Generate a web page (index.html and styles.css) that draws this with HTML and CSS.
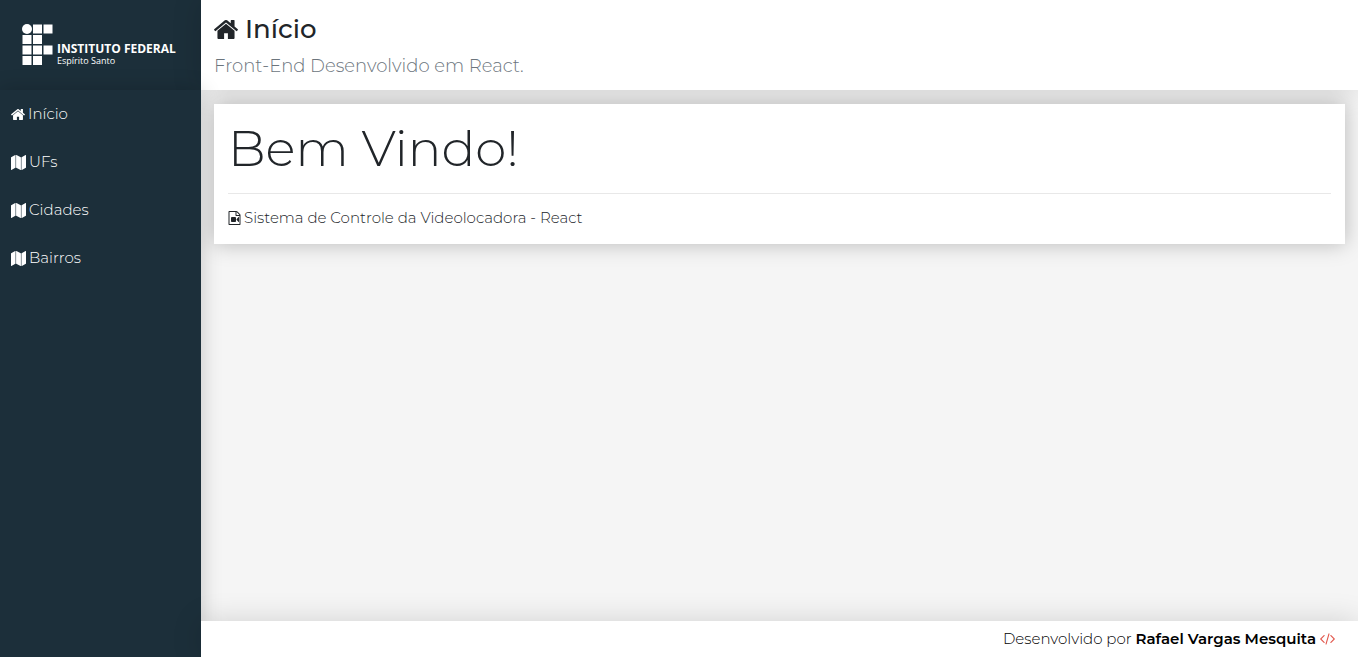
FILE: index.html
```html
<!DOCTYPE html>
<html lang="pt-BR">
<head>
<meta charset="utf-8">
<meta name="viewport" content="width=device-width, initial-scale=1">
<title>Início</title>
<link rel="stylesheet" href="styles.css">
</head>
<body>
<svg class="sprite" aria-hidden="true">
  <symbol id="home" viewBox="89 256 1614 1280"><path d="M1472 992v480q0 26-19 45t-45 19h-384v-384h-256v384h-384q-26 0-45-19t-19-45v-480q0-1 .5-3t.5-3l575-474 575 474q1 2 1 6zm223-69l-62 74q-8 9-21 11h-3q-13 0-21-7l-692-577-692 577q-12 8-24 7-13-2-21-11l-62-74q-8-10-7-23.500t11-21.500l719-599q32-26 76-26t76 26l244 204v-195q0-14 9-23t23-9h192q14 0 23 9t9 23v408l219 182q10 8 11 21.500t-7 23.500z"/></symbol>
  <symbol id="map" viewBox="0 0 1792 1792"><path d="M512 0q13 0 22.500 9.500t9.500 22.500v1472q0 20-17 28l-480 256q-7 4-15 4-13 0-22.500-9.500t-9.500-22.500v-1472q0-20 17-28l480-256q7-4 15-4zm1248 0q13 0 22.500 9.500t9.500 22.500v1472q0 20-17 28l-480 256q-7 4-15 4-13 0-22.500-9.500t-9.500-22.500v-1472q0-20 17-28l480-256q7-4 15-4zm-1120 0q8 0 14 3l512 256q18 10 18 29v1472q0 13-9.500 22.500t-22.500 9.500q-8 0-14-3l-512-256q-18-10-18-29v-1472q0-13 9.500-22.500t22.500-9.500z"/></symbol>
  <symbol id="video" viewBox="128 0 1536 1792"><path d="M1596 380q28 28 48 76t20 88v1152q0 40-28 68t-68 28h-1344q-40 0-68-28t-28-68v-1600q0-40 28-68t68-28h896q40 0 88 20t76 48zm-444-244v376h376q-10-29-22-41l-313-313q-12-12-41-22zm384 1528v-1024h-416q-40 0-68-28t-28-68v-416h-768v1536h1280zm-576-896q52 0 90 38t38 90v384q0 52-38 90t-90 38h-384q-52 0-90-38t-38-90v-384q0-52 38-90t90-38h384zm492 2q20 8 20 30v576q0 22-20 30-8 2-12 2-14 0-23-9l-265-266v-90l265-266q9-9 23-9 4 0 12 2z"/></symbol>
  <symbol id="code" viewBox="100 256 1848 1408"><path d="M681 1399l-50 50q-10 10-23 10t-23-10l-466-466q-10-10-10-23t10-23l466-466q10-10 23-10t23 10l50 50q10 10 10 23t-10 23l-393 393 393 393q10 10 10 23t-10 23zm591-1067l-373 1291q-4 13-15.500 19.500t-23.500 2.500l-62-17q-13-4-19.500-15.500t-2.500-24.500l373-1291q4-13 15.500-19.500t23.500-2.500l62 17q13 4 19.500 15.500t2.500 24.500zm657 651l-466 466q-10 10-23 10t-23-10l-50-50q-10-10-10-23t10-23l393-393-393-393q-10-10-10-23t10-23l50-50q10-10 23-10t23 10l466 466q10 10 10 23t-10 23z"/></symbol>
</svg>
<div class="app">
  <aside class="logo">
    <a class="brand" href="#" aria-label="Instituto Federal Espírito Santo">
      <svg class="mark" viewBox="0 0 31 42" aria-hidden="true">
        <circle cx="5" cy="5" r="5"/>
        <path d="M11 .5h9v9h-9zM21.500 .5h9v9h-9zM.5 11h9v9h-9zM11 11h9v9h-9zM.5 21.500h9v9h-9zM11 21.500h9v9h-9zM21.500 21.500h9v9h-9zM.5 32h9v9h-9zM11 32h9v9h-9z"/>
      </svg>
      <span class="brand-text"><strong>INSTITUTO FEDERAL</strong><span>Espírito Santo</span></span>
    </a>
  </aside>
  <header class="header">
    <h1><svg class="icon-title"><use href="#home"/></svg>Início</h1>
    <p>Front-End Desenvolvido em React.</p>
  </header>
  <aside class="menu">
    <nav>
      <a href="#"><svg class="icon-home"><use href="#home"/></svg>Início</a>
      <a href="#"><svg class="icon-map"><use href="#map"/></svg>UFs</a>
      <a href="#"><svg class="icon-map"><use href="#map"/></svg>Cidades</a>
      <a href="#"><svg class="icon-map"><use href="#map"/></svg>Bairros</a>
    </nav>
  </aside>
  <main class="content">
    <section class="card">
      <h2>Bem Vindo!</h2>
      <hr>
      <p><svg class="icon-video"><use href="#video"/></svg>Sistema de Controle da Videolocadora - React</p>
    </section>
  </main>
  <footer class="footer">
    <span>Desenvolvido por <strong>Rafael Vargas Mesquita</strong></span>
    <svg class="icon-code"><use href="#code"/></svg>
  </footer>
</div>
</body>
</html>
```
FILE: styles.css
```css
* { box-sizing: border-box; }
body {
  margin: 0;
  padding-right: 2px;
  background: #fff;
  color: #212529;
  font-family: Montserrat, Inter, "Open Sans", sans-serif;
  font-size: 15px;
  font-weight: 300;
  line-height: 24px;
}
h1, h2, p { margin: 0; }
a { color: inherit; text-decoration: none; }
svg { fill: currentColor; flex: none; }
.sprite { position: absolute; width: 0; height: 0; }
.app {
  display: grid;
  grid-template-columns: 201px 1fr;
  grid-template-rows: 90px 1fr 36px;
  grid-template-areas: "logo header" "menu content" "menu footer";
  min-height: 100vh;
  overflow: hidden;
  background: #f5f5f5;
}
.logo, .menu { background: #1c2f3a; color: #fff; }
.logo {
  grid-area: logo;
  display: flex;
  align-items: center;
  padding: 0 22px;
}
.brand { display: flex; align-items: flex-end; gap: 4px; }
.mark { width: 31px; height: 42px; }
.brand-text {
  display: flex;
  flex-direction: column;
  font-family: "Open Sans", sans-serif;
  font-size: 9px;
  font-weight: 400;
  line-height: 10px;
  white-space: nowrap;
}
.brand-text strong { font-size: 12px; font-weight: 700; line-height: 14px; }
.header {
  grid-area: header;
  display: flex;
  flex-direction: column;
  justify-content: center;
  gap: 8px;
  padding: 4px 13px 0;
  background: #fff;
  box-shadow: 0 0 30px rgba(0, 0, 0, .15);
}
.header h1 {
  display: flex;
  align-items: center;
  gap: 7px;
  font-size: 26px;
  font-weight: 500;
  line-height: 30px;
}
.header p { color: #6c757d; font-size: 18px; line-height: 28px; }
.menu { grid-area: menu; box-shadow: 0 0 20px rgba(0, 0, 0, .2); }
.menu a {
  display: flex;
  align-items: center;
  gap: 3px;
  height: 48px;
  padding: 0 11px;
}
.header, .menu, .footer { position: relative; z-index: 1; }
.content {
  grid-area: content;
  position: relative;
  z-index: 2;
  padding: 14px 13px;
  overflow: hidden;
}
.card {
  padding: 14px;
  background: #fff;
  box-shadow: 0 0 20px rgba(0, 0, 0, .25);
}
.card h2 { font-size: 50px; font-weight: 300; line-height: 62px; }
.card hr { margin: 13px 0 12px; border: 0; border-top: 1px solid #e8e8e8; }
.card p { display: flex; align-items: center; gap: 3px; }
.footer {
  grid-area: footer;
  display: flex;
  align-items: center;
  justify-content: flex-end;
  gap: 4px;
  padding: 0 23px;
  background: #fff;
  color: #000;
  box-shadow: 0 0 30px rgba(0, 0, 0, .15);
}
.footer strong { font-weight: 600; }
.icon-title { width: 24px; height: 19px; }
.icon-home { width: 14px; height: 11px; }
.icon-map { width: 15px; height: 15px; }
.icon-video { width: 13px; height: 14px; }
.icon-code { width: 15px; height: 12px; color: #e2574c; }
```
